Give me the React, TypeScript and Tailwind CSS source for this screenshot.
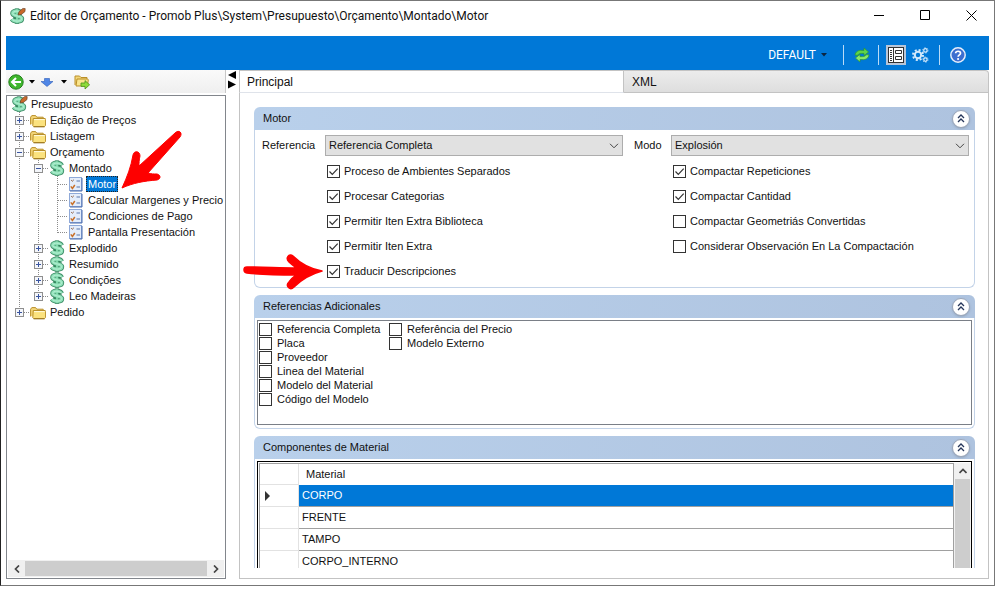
import { useState } from "react";
import type { ReactNode } from "react";

type Line = "none" | "pass" | "tee" | "end";
type IconName = "root" | "folder" | "money" | "list";

interface TreeRow {
  label: string;
  icon: IconName;
  lines: Line[];
  box?: "+" | "-";
}

const tree: TreeRow[] = [
  { label: "Presupuesto", icon: "root", lines: [] },
  { label: "Edição de Preços", icon: "folder", lines: ["tee"], box: "+" },
  { label: "Listagem", icon: "folder", lines: ["tee"], box: "+" },
  { label: "Orçamento", icon: "folder", lines: ["tee"], box: "-" },
  { label: "Montado", icon: "money", lines: ["pass", "tee"], box: "-" },
  { label: "Motor", icon: "list", lines: ["pass", "pass", "tee"] },
  { label: "Calcular Margenes y Precio", icon: "list", lines: ["pass", "pass", "tee"] },
  { label: "Condiciones de Pago", icon: "list", lines: ["pass", "pass", "tee"] },
  { label: "Pantalla Presentación", icon: "list", lines: ["pass", "pass", "end"] },
  { label: "Explodido", icon: "money", lines: ["pass", "tee"], box: "+" },
  { label: "Resumido", icon: "money", lines: ["pass", "tee"], box: "+" },
  { label: "Condições", icon: "money", lines: ["pass", "tee"], box: "+" },
  { label: "Leo Madeiras", icon: "money", lines: ["pass", "end"], box: "+" },
  { label: "Pedido", icon: "folder", lines: ["end"], box: "+" },
];

const leftOptions = [
  { label: "Proceso de Ambientes Separados", checked: true },
  { label: "Procesar Categorias", checked: true },
  { label: "Permitir Iten Extra Biblioteca", checked: true },
  { label: "Permitir Iten Extra", checked: true },
  { label: "Traducir Descripciones", checked: true },
];

const rightOptions = [
  { label: "Compactar Repeticiones", checked: true },
  { label: "Compactar Cantidad", checked: true },
  { label: "Compactar Geometriás Convertidas", checked: false },
  { label: "Considerar Observación En La Compactación", checked: false },
];

const references = [
  ["Referencia Completa", "Placa", "Proveedor", "Linea del Material", "Modelo del Material", "Código del Modelo"],
  ["Referência del Precio", "Modelo Externo"],
];

const materials = ["CORPO", "FRENTE", "TAMPO", "CORPO_INTERNO"];

/* ICONS */

function MoneyIcon({ pen = false }: { pen?: boolean }) {
  const curve = "M12.400 5.400C11.600 2.700 3.800 2.300 3.700 5.400c0 2.900 9 2.100 9 5.300 0 3.200-8 3.100-9.600.4";
  return (
    <svg viewBox="0 0 16 16" className="size-4 shrink-0 overflow-visible" fill="none" strokeLinejoin="round">
      <path d="M8 .4v15.400" stroke="#3f8f68" strokeWidth="4.400" />
      <path d={curve} stroke="#3f8f68" strokeWidth="5" />
      <path d="M8 1.200v13.800" stroke="#7fd6a8" strokeWidth="2.600" />
      <path d={curve} stroke="#8fe0b8" strokeWidth="3.200" />
      <path d={curve} stroke="#b5f0d3" strokeWidth="1" />
      <path d="m9.600 5.400 3 1M4.200 9.600l2.600.8" stroke="#2f7f58" strokeWidth="1.200" />
      {pen && <path d="m9 7 1-3.400L13.800.4l2.400.2-.2 3-3.800 3z" fill="#c8682a" stroke="#5e3a20" strokeWidth=".6" />}
    </svg>
  );
}

function FolderIcon() {
  return (
    <svg viewBox="0 0 16 16" className="size-4 shrink-0" strokeLinejoin="round">
      <path d="M.6 12.5V5.200l1.200-1.600h3.800l1.200 1.600h6.400v3" fill="#f3d678" stroke="#b98f2a" />
      <path d="M3.200 6.500h12l.4 1v6l-1 1H3.600l-.8-.8z" fill="#fbe27e" stroke="#b98f2a" />
      <path d="M4 7.600h10.600" stroke="#fffbe0" strokeWidth="1" />
      <path d="M3.600 14.900h11" stroke="#8d6c1f" strokeWidth=".8" />
    </svg>
  );
}

function ListIcon() {
  return (
    <svg viewBox="0 0 16 16" className="size-4 shrink-0" fill="none">
      <rect x="1.5" y="1.5" width="12" height="13" fill="#e4edfb" stroke="#8fa9d8" />
      <path d="M14 2v13H2" stroke="#4a6dae" />
      <path d="m3.200 4.200 1.200 1 1.400-1.400" stroke="#8a5a3a" />
      <path d="m2.800 10.400 1.600 2L6.800 9" stroke="#c8702a" strokeWidth="1.500" />
      <path d="M8.500 5h3.500M8.500 11h3.500" stroke="#5b76ab" />
    </svg>
  );
}

function TreeIcon({ name }: { name: IconName }) {
  if (name === "folder") return <FolderIcon />;
  if (name === "list") return <ListIcon />;
  return <MoneyIcon pen={name === "root"} />;
}

function TreeLine({ line, box }: { line: Line; box?: "+" | "-" }) {
  return (
    <svg viewBox="0 0 19 16" className="h-4 w-[19px] shrink-0" fill="none" shapeRendering="crispEdges">
      <g stroke="#8c8c8c" strokeDasharray="1 1">
        {line !== "none" && <path d={line === "end" ? "M9.5 0v9" : "M9.5 0v16"} />}
        {(line === "tee" || line === "end") && <path d="M10 8.5h9" />}
      </g>
      {box && (
        <>
          <rect x="5.5" y="4.5" width="8" height="8" fill="#f4f6fa" stroke="#8f8f8f" />
          <path d={box === "+" ? "M7 8.5h5M9.5 6v5" : "M7 8.5h5"} stroke="#3a55a0" />
        </>
      )}
    </svg>
  );
}

function Caret({ className }: { className: string }) {
  return (
    <svg viewBox="0 0 6 4" className={`h-1 w-1.5 shrink-0 ${className}`}>
      <path d="M0 0h6L3 3.4z" fill="currentColor" />
    </svg>
  );
}

/* CONTROLS */

function CheckBox({ label, checked = false, className = "" }: { label: string; checked?: boolean; className?: string }) {
  return (
    <label className={`flex items-center whitespace-nowrap ${className}`}>
      <span className="grid shrink-0">
        <input
          type="checkbox"
          defaultChecked={checked}
          className="peer col-start-1 row-start-1 size-[13px] appearance-none border border-[#333] bg-white"
        />
        <svg
          viewBox="0 0 13 13"
          className="pointer-events-none invisible col-start-1 row-start-1 size-[13px] peer-checked:visible"
          fill="none"
        >
          <path d="m2.5 6.5 2.8 2.8 5.4-5.6" stroke="#333" strokeWidth="1.2" />
        </svg>
      </span>
      {label}
    </label>
  );
}

function Select({ id, value }: { id: string; value: string }) {
  return (
    <span className="grid">
      <select
        id={id}
        className="col-start-1 row-start-1 h-[21px] w-full appearance-none border border-[#adadad] bg-[#e1e1e1] pl-[3px]"
      >
        <option>{value}</option>
      </select>
      <svg
        viewBox="0 0 10 6"
        className="pointer-events-none col-start-1 row-start-1 mr-1 h-1.5 w-2.5 self-center justify-self-end"
        fill="none"
      >
        <path d="m1 .8 4 4 4-4" stroke="#444" />
      </svg>
    </span>
  );
}

function Panel({ title, open = false, children }: { title: string; open?: boolean; children: ReactNode }) {
  return (
    <section className={open ? "flex min-h-0 flex-1 flex-col" : ""}>
      <header className="flex h-[23px] shrink-0 items-center justify-between rounded-t-md bg-linear-to-r from-[#b9d0eb] to-[#aec3df] pr-[5px] pl-[9px]">
        <h2>{title}</h2>
        <button
          aria-label={`Contraer ${title}`}
          className="grid size-[18px] place-items-center rounded-full border border-[#9aa5b8] bg-white shadow-sm"
        >
          <svg viewBox="0 0 8 9" className="h-[9px] w-2" fill="none">
            <path d="m1 4 3-3 3 3M1 8l3-3 3 3" stroke="#26365a" strokeWidth="1.3" />
          </svg>
        </button>
      </header>
      <div className={open ? "min-h-0 flex-1 overflow-hidden border-x border-[#c3d3e8] px-0.5 pt-0.5" : "rounded-b-md border border-t-0 border-[#c3d3e8]"}>
        {children}
      </div>
    </section>
  );
}

function Separator() {
  return <span className="h-5 w-px bg-[#b9dbf7]" />;
}

/* WINDOW PARTS */

function TitleBar() {
  return (
    <div className="flex h-[35px] shrink-0 items-start">
      <div className="flex h-[29px] flex-1 items-center gap-[5px] pl-2">
        <MoneyIcon pen />
        <h1 className="font-[Roboto,sans-serif] text-[12px] whitespace-nowrap">
          Editor de Orçamento - Promob Plus\System\Presupuesto\Orçamento\Montado\Motor
        </h1>
      </div>
      <div className="flex">
        <button aria-label="Minimizar" className="grid h-[29px] w-[46px] place-items-center">
          <svg viewBox="0 0 11 11" className="size-[11px]"><path d="M0 5.5h10" stroke="#000" /></svg>
        </button>
        <button aria-label="Maximizar" className="grid h-[29px] w-[46px] place-items-center">
          <svg viewBox="0 0 11 11" className="size-[11px]"><path d="M.5.5h9v9h-9z" fill="none" stroke="#000" /></svg>
        </button>
        <button aria-label="Cerrar" className="grid h-[29px] w-[46px] place-items-center">
          <svg viewBox="0 0 11 11" className="size-[11px]"><path d="m.5.5 10 10m0-10-10 10" stroke="#000" /></svg>
        </button>
      </div>
    </div>
  );
}

function MainToolbar() {
  return (
    <div className="flex h-[34px] shrink-0 items-center justify-end gap-2.5 bg-[#0078d7] pt-1 pr-[23px]">
      <button className="mr-1.5 flex items-center gap-[5px] font-[Roboto,sans-serif] text-[12px] text-white">
        DEFAULT
        <Caret className="text-[#0b2540]" />
      </button>
      <Separator />
      <button aria-label="Actualizar" className="-mr-0.5">
        <svg viewBox="0 0 16 16" className="size-4" strokeLinejoin="round">
          <path d="M1 8.2C1.4 4.6 4.6 3 8 3.4h2V1l4.6 4L10 8.6V6.4H7.6C5.6 6.4 4.4 7 4 8.2z" fill="#5fd44a" stroke="#2b9a2f" strokeWidth=".7" />
          <path d="M15 7.8c-.4 3.6-3.600 5.200-7 4.800H6V15l-4.600-4L6 7.400v2.200h2.400c2 0 3.200-.6 3.600-1.800z" fill="#8be86a" stroke="#2b9a2f" strokeWidth=".7" />
        </svg>
      </button>
      <Separator />
      <div className="-ml-[3px] flex items-center gap-1.5">
        <button aria-label="Formulario" className="grid size-5 place-items-center bg-[#b9c6d8]">
          <svg viewBox="0 0 16 16" className="size-4" fill="none" stroke="#333">
            <rect x=".5" y=".5" width="15" height="15" fill="#fff" />
            <path d="M5.500 1v14M2 3.500h2M2 5.500h2M2 7.500h2M2 9.500h2M2 11.500h2M2 13.500h2M7.500 3.500h6v3h-6zM7.500 9.500h6v3h-6z" />
          </svg>
        </button>
        <button aria-label="Configuración">
          <svg viewBox="0 0 17 16" className="h-4 w-[17px]" fill="none" stroke="#d3e9fb">
            <circle cx="6" cy="8" r="3.2" strokeWidth="2" />
            <circle cx="6" cy="8" r="5" strokeWidth="2" strokeDasharray="2 1.93" />
            <circle cx="13.4" cy="3.4" r="1.7" strokeWidth="1.2" />
            <circle cx="13.4" cy="3.4" r="2.6" strokeWidth="1" strokeDasharray="1.2 1.52" />
            <circle cx="13.4" cy="12.6" r="1.7" strokeWidth="1.2" />
            <circle cx="13.4" cy="12.6" r="2.6" strokeWidth="1" strokeDasharray="1.2 1.52" />
          </svg>
        </button>
      </div>
      <Separator />
      <button aria-label="Ayuda">
        <svg viewBox="0 0 16 16" className="size-4" fill="none">
          <circle cx="8" cy="8" r="7.2" fill="#3d6fd0" stroke="#e6eefb" strokeWidth="1.5" />
          <path d="M5.6 6.2C5.8 3.6 10.6 3.6 10.5 6.2c0 1.7-2.4 1.6-2.4 3.6" stroke="#fff" strokeWidth="1.7" />
          <circle cx="8.1" cy="12" r="1.1" fill="#fff" />
        </svg>
      </button>
    </div>
  );
}

function Sidebar() {
  const [selected, setSelected] = useState("Motor");

  return (
    <aside className="flex w-[220px] shrink-0 flex-col">
      <div className="mb-0.5 flex h-[23px] shrink-0 items-center border-r border-[#c8c8c8] bg-linear-to-b from-[#fafafa] to-[#efefef] pl-0.5">
        <button aria-label="Atrás">
          <svg viewBox="0 0 16 16" className="size-4" fill="none">
            <circle cx="8" cy="8" r="7.2" fill="#3fb62c" stroke="#23801c" />
            <path d="M13 8H4.5M8 4 4 8l4 4" stroke="#fff" strokeWidth="2" />
          </svg>
        </button>
        <Caret className="mx-[5px] text-black" />
        <button aria-label="Bajar">
          <svg viewBox="0 0 14 14" className="size-3.5">
            <path d="M4.500 3.500h5v3H13l-6 5-6-5h3.500z" fill="#4f86e6" stroke="#2c5cb8" strokeWidth=".6" />
          </svg>
        </button>
        <Caret className="mx-[7px] text-black" />
        <button aria-label="Abrir carpeta">
          <svg viewBox="0 0 16 16" className="size-4" strokeLinejoin="round">
            <path d="M1 11V2h4.5L7 3.5h6V8" fill="#f3d678" stroke="#b98f2a" />
            <path d="M3 5h10.5l.8.8-.8 6.2H2z" fill="#fbe58c" stroke="#b98f2a" />
            <path d="M7 9h4V6.6l4.6 4.2L11 15v-2.6H7z" fill="#8fdc3a" stroke="#4d8f1b" strokeWidth=".8" />
          </svg>
        </button>
      </div>

      <div className="flex min-h-0 flex-1 flex-col border border-[#82868c] p-px pt-0">
        <ul className="min-h-0 flex-1 overflow-hidden pl-0.5">
          {tree.map((row) => (
            <li key={row.label} className="flex h-4 items-center whitespace-nowrap">
              {row.lines.map((line, i) => (
                <TreeLine key={i} line={line} box={i === row.lines.length - 1 ? row.box : undefined} />
              ))}
              <button onClick={() => setSelected(row.label)} className="ml-px flex items-center gap-0.5">
                <TreeIcon name={row.icon} />
                <span
                  className={
                    row.label === selected
                      ? "bg-[#0078d7] px-0.5 leading-4 text-white outline-1 -outline-offset-1 outline-dotted outline-[#222]"
                      : "px-0.5 leading-4"
                  }
                >
                  {row.label}
                </span>
              </button>
            </li>
          ))}
        </ul>
        <div className="flex h-[17px] items-stretch bg-[#f0f0f0]">
          <button aria-label="Izquierda" className="grid w-[17px] place-items-center">
            <svg viewBox="0 0 6 8" className="h-2 w-1.5" fill="none"><path d="M5 .5 1.5 4 5 7.5" stroke="#444" strokeWidth="1.7" /></svg>
          </button>
          <span className="my-px flex-1 bg-[#cdcdcd]" />
          <button aria-label="Derecha" className="grid w-[17px] place-items-center">
            <svg viewBox="0 0 6 8" className="h-2 w-1.5" fill="none"><path d="M1 .5 4.5 4 1 7.5" stroke="#444" strokeWidth="1.7" /></svg>
          </button>
        </div>
      </div>
    </aside>
  );
}

function MaterialGrid() {
  return (
    <div className="flex h-full border border-b-0 border-black pt-px pl-px">
      <table className="w-full table-fixed border-separate border-spacing-0 self-start border-t border-l border-[#a0a0a0]">
        <thead>
          <tr className="h-[21px]">
            <th className="w-[39px] border-r border-b border-[#e2e2e2]" />
            <th className="border-r border-[#a0a0a0] pl-[7px] text-left font-normal">Material</th>
          </tr>
        </thead>
        <tbody>
          {materials.map((name, i) => (
            <tr key={name} className="h-[22px]">
              <td className="border-r border-b border-[#e2e2e2] pl-[5px]">
                {i === 0 && (
                  <svg viewBox="0 0 5 10" className="h-2.5 w-[5px]"><path d="M0 0v10l5-5z" fill="#333" /></svg>
                )}
              </td>
              <td
                className={
                  i === 0
                    ? "border-r border-b border-[#a0a0a0] bg-[#0078d7] pl-[3px] text-white"
                    : "border-r border-b border-[#a0a0a0] pl-[3px]"
                }
              >
                {name}
              </td>
            </tr>
          ))}
        </tbody>
      </table>
      <div className="flex w-[17px] shrink-0 flex-col bg-[#f0f0f0]">
        <button aria-label="Arriba" className="grid h-4 w-full place-items-center">
          <svg viewBox="0 0 8 6" className="h-1.5 w-2" fill="none"><path d="M.5 5 4 1.5 7.5 5" stroke="#444" strokeWidth="1.7" /></svg>
        </button>
        <span className="mx-px flex-1 bg-[#cdcdcd]" />
      </div>
    </div>
  );
}

function RedArrows() {
  return (
    <svg
      viewBox="0 0 340 300"
      className="pointer-events-none absolute top-0 left-0 h-[300px] w-[340px]"
      fill="#fe0000"
      stroke="#fe0000"
      strokeLinejoin="round"
    >
      <path d="M175 133c4-4 8 0 5 4l-32 36c3 1 6 1 9 1 4 1 4 5 0 6-13 1-24 3-35 8 5-11 9-21 11-33 1-5 7-4 7 1-1 4-1 7-1 10z" />
      <path d="M247 267c18 0 32 1 49 1-3-3-5-4-7-6-4-4 0-9 4-6 8 8 18 13 29 15-11 3-20 8-28 16-4 4-9-1-5-5 2-3 4-5 7-7-17 0-31 0-49-2-4-1-4-6 0-6z" strokeWidth="1.500" />
    </svg>
  );
}

export default function App() {
  return (
    <div className="relative h-screen bg-white pr-[5px] pb-2.5 font-['Liberation_Sans',Arial,sans-serif] text-[11px] text-[#111]">
      <div className="flex h-full flex-col border border-[#777] border-l-[#222] pb-[6px]">
        <TitleBar />

        <div className="flex min-h-0 flex-1 flex-col px-[5px]">
          <MainToolbar />

          <div className="flex min-h-0 flex-1">
            <Sidebar />

            {/* SPLITTER */}
            <div className="w-[13px] shrink-0 pt-px pl-0.5">
              <svg viewBox="0 0 9 18" className="h-[18px] w-[9px]"><path d="M8 0v8L0 4zM0 9.5v8l8-4z" /></svg>
            </div>

            <main className="flex min-w-0 flex-1 flex-col">
              <div role="tablist" className="flex h-[23px] shrink-0">
                <button role="tab" aria-selected="true" className="w-[385px] shrink-0 border border-[#c3c3c3] border-b-[#dfe3ea] bg-white pt-px pl-[7px] text-left text-[12px]">
                  Principal
                </button>
                <button role="tab" aria-selected="false" className="flex-1 rounded-tr border border-l-0 border-[#c3c3c3] bg-linear-to-b from-[#ececec] to-[#dedede] pt-px pl-2 text-left text-[12px]">
                  XML
                </button>
              </div>

              <div className="flex min-h-0 flex-1 flex-col gap-[7px] border border-t-0 border-[#c3c3c3] pt-3.5 pr-[13px] pb-2.5 pl-3.5">
                <Panel title="Motor">
                  <div className="grid grid-cols-[63px_1fr_48px_1fr] items-center pt-[5px] pr-[5px] pl-[7px]">
                    <label htmlFor="referencia">Referencia</label>
                    <Select id="referencia" value="Referencia Completa" />
                    <label htmlFor="modo" className="pl-[11px]">Modo</label>
                    <Select id="modo" value="Explosión" />
                  </div>
                  <div className="grid grid-cols-[63px_1fr_48px_1fr] pt-[3px] pr-[5px] pb-[3px] pl-[7px]">
                    <div className="col-start-2 pl-0.5">
                      {leftOptions.map((o) => (
                        <CheckBox key={o.label} label={o.label} checked={o.checked} className="h-[25px] gap-1" />
                      ))}
                    </div>
                    <div className="col-start-4 pl-0.5">
                      {rightOptions.map((o) => (
                        <CheckBox key={o.label} label={o.label} checked={o.checked} className="h-[25px] gap-1" />
                      ))}
                    </div>
                  </div>
                </Panel>

                <Panel title="Referencias Adicionales">
                  <div className="px-0.5 pt-0.5 pb-[3px]">
                    <div className="flex h-[105px] border border-[#7a7f87] pt-px pl-px">
                      {references.map((column) => (
                        <div key={column[0]} className="w-[130px]">
                          {column.map((name) => (
                            <CheckBox key={name} label={name} className="h-3.5 gap-[5px]" />
                          ))}
                        </div>
                      ))}
                    </div>
                  </div>
                </Panel>

                <Panel title="Componentes de Material" open>
                  <MaterialGrid />
                </Panel>
              </div>
            </main>
          </div>
        </div>
      </div>

      <RedArrows />
    </div>
  );
}
